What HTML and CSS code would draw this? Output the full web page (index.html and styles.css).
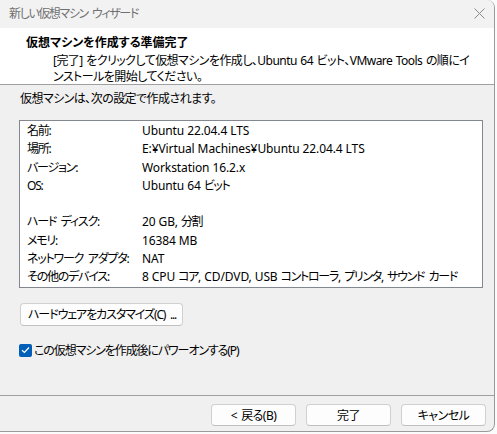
FILE: index.html
```html
<!DOCTYPE html>
<html lang="ja">
<head>
<meta charset="utf-8">
<title>新しい仮想マシン ウィザード</title>
<link rel="stylesheet" href="styles.css">
</head>
<body>
<div class="window">
  <div class="titlebar">
    <span class="title">新しい仮想マシン ウィザード</span>
    <svg class="close" width="11" height="11" viewBox="0 0 11 11"><path d="M0.5 0.5 L10.5 10.5 M10.5 0.5 L0.5 10.5" stroke="#8a8a8a" stroke-width="1" fill="none"/></svg>
  </div>
  <div class="header">
    <div class="header-title">仮想マシンを作成する準備完了</div>
    <div class="header-desc">[完了] をクリックして仮想マシンを作成し、Ubuntu 64 ビット、VMware Tools の順にイ<br>ンストールを開始してください。</div>
  </div>
  <div class="content">
    <div class="intro">仮想マシンは、次の設定で作成されます。</div>
    <div class="summary">
      <div class="row"><span class="label">名前:</span><span class="value">Ubuntu 22.04.4 LTS</span></div>
      <div class="row"><span class="label">場所:</span><span class="value">E:¥Virtual Machines¥Ubuntu 22.04.4 LTS</span></div>
      <div class="row"><span class="label">バージョン:</span><span class="value">Workstation 16.2.x</span></div>
      <div class="row"><span class="label">OS:</span><span class="value">Ubuntu 64 <span class="ja">ビット</span></span></div>
      <div class="row"></div>
      <div class="row"><span class="label">ハード ディスク:</span><span class="value">20 GB, <span class="ja">分割</span></span></div>
      <div class="row"><span class="label">メモリ:</span><span class="value">16384 MB</span></div>
      <div class="row"><span class="label">ネットワーク アダプタ:</span><span class="value">NAT</span></div>
      <div class="row"><span class="label">その他のデバイス:</span><span class="value">8 CPU <span class="ja">コア</span>, CD/DVD, USB <span class="ja">コントローラ</span>, <span class="ja">プリンタ</span>, <span class="ja">サウンド カード</span></span></div>
    </div>
    <button class="btn customize">ハードウェアをカスタマイズ(C) ...</button>
    <label class="check">
      <span class="box"><svg width="9" height="8" viewBox="0 0 9 8"><path d="M1 4.2 L3.4 6.5 L8 1.5" stroke="#fff" stroke-width="1.2" fill="none"/></svg></span>
      <span class="check-label">この仮想マシンを作成後にパワーオンする(P)</span>
    </label>
  </div>
  <div class="footer">
    <button class="btn nav">&lt; 戻る(B)</button>
    <button class="btn nav">完了</button>
    <button class="btn nav">キャンセル</button>
  </div>
</div>
</body>
</html>
```
FILE: styles.css
```css
html, body {
  margin: 0;
  padding: 0;
  background: #fbfbfb;
}

body {
  font-family: "Noto Sans", "Noto Sans CJK JP", sans-serif;
  font-size: 12px;
  color: #000;
  font-feature-settings: "palt";
  letter-spacing: -0.55px;
  white-space: nowrap;
}

.window {
  width: 494px;
  height: 431px;
  background: #f0f0f0;
  border-right: 1px solid #9a9a9a;
  border-bottom: 1px solid #9a9a9a;
  border-top-right-radius: 8px;
  border-bottom-right-radius: 8px;
  display: flex;
  flex-direction: column;
  overflow: hidden;
}

/* window caption */
.titlebar {
  height: 28px;
  flex: none;
  background: #f2f2f2;
  display: flex;
  align-items: center;
  justify-content: space-between;
  padding: 0 9px 0 9px;
  box-sizing: border-box;
}

.title {
  color: #707070;
  line-height: 16px;
  letter-spacing: -1.4px;
  word-spacing: 2.5px;
}

.close {
  margin-top: -2px;
}

/* white wizard page header */
.header {
  flex: none;
  height: 57px;
  box-sizing: border-box;
  background: #fff;
  border-bottom: 1px solid #a0a0a0;
  padding: 7px 0 0 26px;
}

.header-title {
  font-weight: bold;
  line-height: 16px;
  letter-spacing: 0;
}

.header-desc {
  margin-top: 2px;
  padding-left: 27px;
  line-height: 16px;
  word-spacing: 1px;
}

.content {
  padding: 6px 0 0 19px;
}

.intro {
  line-height: 16px;
  padding-left: 1px;
}

/* settings summary list */
.summary {
  margin-top: 13px;
  width: 464px;
  height: 168px;
  box-sizing: border-box;
  background: #fff;
  border: 1px solid #828790;
  padding: 1px 0 0 7px;
}

.row {
  display: flex;
  height: 18.25px;
  line-height: 18.25px;
}

.label {
  width: 115px;
  flex: none;
  letter-spacing: -1.2px;
  word-spacing: 2.5px;
}

.value {
  letter-spacing: -0.1px;
}

.value .ja {
  letter-spacing: -1.3px;
  word-spacing: 2.5px;
}

.btn {
  font: inherit;
  font-feature-settings: "palt";
  letter-spacing: inherit;
  color: #000;
  background: #fdfdfd;
  border: 1px solid #d0d0d0;
  border-bottom-color: #c0c0c0;
  border-radius: 4px;
  padding: 0;
  box-sizing: border-box;
  white-space: nowrap;
}

.customize {
  display: block;
  margin: 15px 0 0 1px;
  width: 163px;
  height: 23px;
  text-align: left;
  padding-left: 7px;
  line-height: 20px;
  letter-spacing: -1.1px;
  word-spacing: 2.5px;
}

.check {
  display: flex;
  align-items: center;
  gap: 2px;
  margin-top: 17px;
  line-height: 16px;
}

.check .box {
  width: 13px;
  height: 13px;
  border-radius: 2px;
  background: #005fb8;
  display: flex;
  align-items: center;
  justify-content: center;
  margin-top: -2px;
}

.check-label {
  letter-spacing: -1.1px;
}

/* dialog buttons */
.footer {
  margin-top: auto;
  flex: none;
  height: 36px;
  box-sizing: border-box;
  border-top: 1px solid #a0a0a0;
  padding: 8px 8px 0 0;
  display: flex;
  justify-content: flex-end;
  align-items: flex-start;
  gap: 10px;
}

.nav {
  width: 85px;
  height: 22px;
  line-height: 19px;
  text-align: center;
  word-spacing: 1.5px;
}
```
